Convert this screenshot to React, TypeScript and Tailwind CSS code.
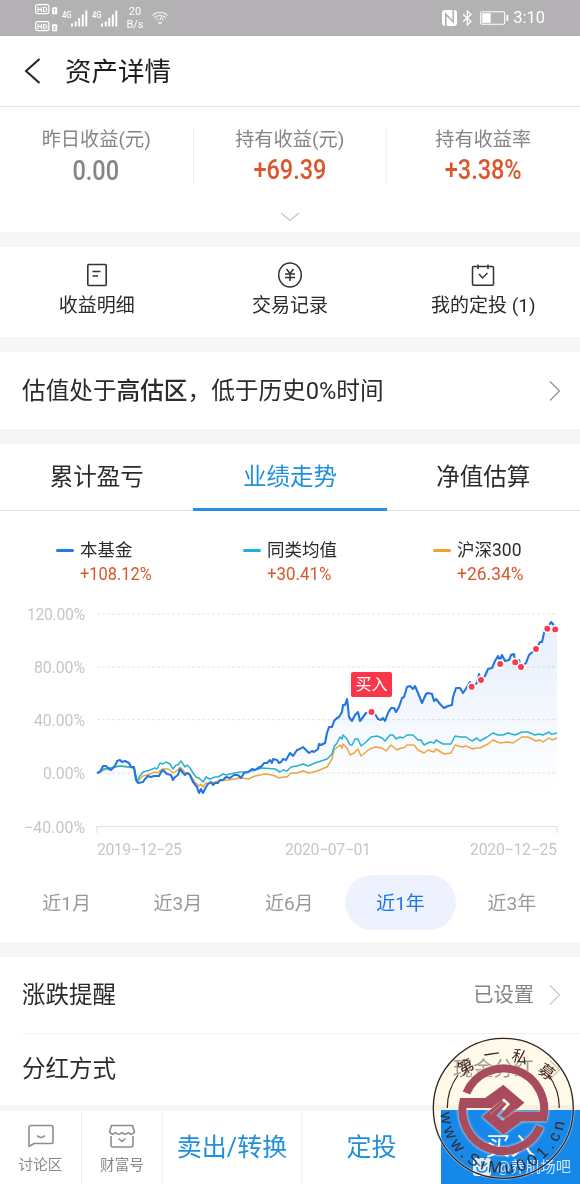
import React from 'react'
import clsx from 'clsx'

const FUND =
  '97,773 100,772 103,766 106,766 109,769 111,770 114,767 116,764 117,761 120,760 122,762 125,761 129,763 131,767 134,767 136,780 138,783 143,782 145,779 148,776 151,777 154,776 157,776 159,776 161,772 163,770 167,774 171,775 173,780 175,777 178,775 180,769 183,773 185,775 187,773 190,775 193,782 197,787 199,793 201,789 203,793 206,787 208,784 211,782 213,785 215,783 218,783 220,780 223,780 226,777 230,778 234,775 238,775 241,778 244,773 248,772 252,769 255,770 258,768 262,766 264,763 267,763 270,760 272,763 273,759 277,760 279,763 281,762 283,759 286,760 290,753 293,756 297,750 300,749 303,747 306,750 309,753 312,751 314,752 318,749 319,744 321,745 325,743 327,733 329,727 332,727 334,721 337,718 339,717 342,712 343,705 345,705 347,699 348,707 349,717 352,721 355,715 358,712 360,721 363,717 366,713 371,712 375,714 378,719 381,720 383,718 385,721 388,713 391,708 394,708 396,712 399,707 402,698 404,697 407,687 410,686 413,689 415,686 418,693 422,703 426,694 428,693 432,694 434,701 436,699 440,704 444,708 448,706 452,705 453,697 456,688 460,688 463,693 467,687 470,682 472,687 477,683 479,674 481,680 485,676 488,669 492,668 495,661 498,656 500,660 502,655 505,661 509,660 511,655 514,654 515,662 519,660 521,667 526,663 529,655 536,649 540,642 542,642 544,633 547,629 551,622 553,624 555,629 557,629'

const PEERS =
  '97,773 104,769 110,768 115,767 120,766 130,767 134,768 137,781 140,776 143,772 147,771 150,770 155,768 157,769 160,763 163,764 166,762 170,764 173,769 176,765 178,765 181,761 185,767 187,765 190,768 193,773 196,777 199,778 203,782 206,777 210,779 215,777 218,777 223,774 226,775 230,774 240,772 248,772 255,770 262,768 275,769 280,772 283,770 287,771 291,767 297,766 303,764 308,766 315,763 327,759 332,754 334,747 337,743 340,737 342,739 343,735 347,739 350,745 352,745 355,739 358,739 361,746 365,743 371,737 377,736 382,738 385,741 390,735 393,735 396,739 400,737 403,738 407,735 413,735 418,740 421,740 424,745 430,742 434,743 436,740 443,744 451,744 455,736 460,737 466,737 472,741 477,738 480,741 487,737 493,733 498,735 503,735 508,733 515,735 522,732 528,732 535,735 539,734 543,735 549,732 551,734 553,734 557,733'

const CSI300 =
  '97,773 104,770 110,768 120,766 134,768 137,782 143,776 150,774 155,772 157,773 162,769 168,769 171,771 173,773 176,771 178,770 180,767 183,770 185,773 189,773 192,778 195,782 199,786 201,784 203,787 206,783 212,783 218,781 228,780 240,778 243,778 248,779 255,776 265,774 272,775 275,776 279,778 283,777 287,777 291,773 297,773 303,771 309,773 317,771 327,767 332,759 334,750 340,745 342,748 343,744 347,748 350,755 354,753 358,749 361,756 367,751 370,749 375,747 382,748 386,751 391,745 397,750 401,748 404,748 407,745 414,745 418,750 424,753 428,750 434,752 436,749 444,754 451,753 455,745 462,747 466,746 473,749 476,748 480,748 488,744 493,740 500,743 508,742 513,743 522,737 528,737 536,741 540,740 543,742 549,738 552,740 557,738'

const BUYS = [
  [371.5, 712], [471.7, 686.7], [481, 680], [500.2, 664], [515.2, 662.3],
  [521, 667], [536, 649], [547.3, 628.8], [555.2, 629.4],
]

const AXIS = [
  { y: 614, label: '120.00%', len: 58 },
  { y: 667, label: '80.00%', len: 51 },
  { y: 719.7, label: '40.00%', len: 51 },
  { y: 773, label: '0.00%', len: 42 },
  { y: 826.5, label: '−40.00%', len: 61 },
]

const STATS = [
  { label: '昨日收益(元)', value: '0.00', tone: 'text-[#858585] top-px' },
  { label: '持有收益(元)', value: '+69.39', tone: 'text-[#d9572a]' },
  { label: '持有收益率', value: '+3.38%', tone: 'text-[#d9572a]' },
]

const LEGEND = [
  { name: '本基金', value: '+108.12%', pad: 'pl-14 w-[243px]', bar: 'bg-[#2477e6]', fit: 'scale-x-[0.91]' },
  { name: '同类均值', value: '+30.41%', pad: 'w-[190px]', bar: 'bg-[#1db1dd]', fit: 'scale-x-[0.94]' },
  { name: '沪深300', value: '+26.34%', pad: '', bar: 'bg-[#f2a32c]', fit: 'scale-x-[0.97]' },
]

const PERIODS = ['近1月', '近3月', '近6月', '近1年', '近3年']

const Gap = () => <div className="h-[15px] shrink-0 bg-[#f6f6f6]" />

const Chevron = ({ className }: { className?: string }) => (
  <svg className={className} width="12" height="22" viewBox="0 0 12 22" fill="none" stroke="currentColor" strokeWidth="1.4">
    <path d="M1 1.5 10.5 11 1 20.5" />
  </svg>
)

const Signal = () => (
  <svg width="17" height="17" viewBox="0 0 17 17" fill="#fff">
    <path d="M0 13.5h2v3H0zM3.7 11.5h2v5h-2zM7.2 8h2v8.5h-2zM10.8 4.5h2v12h-2zM14.3 0.5h2v16h-2z" />
  </svg>
)

const HdBadge = ({ n }: { n: string }) => (
  <svg width="23" height="11" viewBox="0 0 23 11" fontFamily="Roboto, sans-serif" fontWeight="700" textAnchor="middle">
    <rect x="0.6" y="0.6" width="13.3" height="9" rx="2" fill="none" stroke="#fff" strokeWidth="1.2" />
    <text x="7.3" y="7.9" fontSize="7.8" fill="#fff">HD</text>
    <rect x="17" y="3.2" width="5.2" height="7" rx="1" fill="#fff" />
    <text x="19.6" y="9" fontSize="6" fill="#b3b1b4">{n}</text>
  </svg>
)

const StatusBar = () => (
  <div className="flex h-9 shrink-0 items-center justify-between bg-[#b3b1b4] pr-[35px] pl-[35px] font-[Roboto] text-white">
    <div className="flex items-center">
      <div className="flex flex-col gap-[6px]">
        <HdBadge n="1" />
        <HdBadge n="2" />
      </div>
      <div className="ml-[4px] flex h-[17px]">
        <span className="w-[9px] origin-left scale-x-[0.8] text-[9.5px] leading-[9px] font-medium">4G<small className="block text-[6px] leading-[8px] opacity-40">↑↓</small></span>
        <Signal />
      </div>
      <div className="ml-[4px] flex h-[17px]">
        <span className="w-[9px] origin-left scale-x-[0.8] text-[9.5px] leading-[9px] font-medium">4G</span>
        <Signal />
      </div>
      <div className="ml-[8px] w-[18px] text-center text-[11px] leading-[13px]">
        20
        <br />
        B/s
      </div>
      <svg className="ml-[8px] opacity-90" width="16" height="14" viewBox="0 0 16 14" fill="none" stroke="#fff" strokeWidth="1.1">
        <path d="M0.5 4.5C4.5 0.2 11.5 0.2 15.5 4.5M2.5 6.7C3.4 5.7 4.3 5.2 5.3 4.8M10.7 4.8C11.8 5.2 12.7 5.8 13.5 6.7M4.5 9C5 8.4 5.4 8.1 6 7.9M10 7.9C10.7 8.1 11 8.4 11.5 9" />
        <path d="M6.3 5.6C6.3 3.5 9.7 3.5 9.7 5.6C9.7 7 8 7 8 9M6.3 11 8 12.8 9.7 11" />
      </svg>
    </div>
    <div className="flex items-center">
      <svg width="15" height="16" viewBox="0 0 15 16">
        <rect width="15" height="16" rx="3" fill="#fff" />
        <path d="M3.8 16V4.2L10.6 11.3M11.2 0V11.8L4.4 4.7" fill="none" stroke="#b3b1b4" strokeWidth="1.6" />
      </svg>
      <svg className="ml-[5px]" width="11" height="16" viewBox="0 0 11 16" fill="none" stroke="#fff" strokeWidth="1.3">
        <path d="M1 4.2 9 11.5 5.3 15V1L9 4.5 1 11.8" />
      </svg>
      <svg className="ml-[7px]" width="29" height="14" viewBox="0 0 29 14">
        <rect x="0.7" y="0.7" width="24" height="12.6" rx="1.5" fill="none" stroke="#fff" strokeWidth="1.1" />
        <rect x="2.2" y="2.2" width="8.5" height="9.6" fill="#fff" />
        <rect x="26.5" y="4" width="1.7" height="6" fill="#fff" />
      </svg>
      <span className="ml-[4px] pt-px text-[16.5px] leading-none">3:10</span>
    </div>
  </div>
)

const Chart = () => (
  <svg className="block" width="580" height="270" viewBox="0 600 580 270" fontFamily="Roboto, 'Noto Sans CJK SC', sans-serif">
    <defs>
      <linearGradient id="area" x1="0" y1="620" x2="0" y2="795" gradientUnits="userSpaceOnUse">
        <stop offset="0" stopColor="#2f7be8" stopOpacity="0.12" />
        <stop offset="1" stopColor="#2f7be8" stopOpacity="0" />
      </linearGradient>
    </defs>
    {AXIS.map(({ y, label, len }, i) => (
      <g key={label}>
        {i < 4 && <path d={`M97 ${y}H557`} stroke="#e4e4e4" strokeDasharray="3 2" />}
        <text x="85" y={y + 6.2} fontSize="15.8" fill="#c6c6c6" textAnchor="end" textLength={len}>
          {label}
        </text>
      </g>
    ))}
    <path d="M97 833V826.5H557V833" fill="none" stroke="#e2e2e2" strokeWidth="1.2" />
    <polygon points={`97,800 ${FUND} 557,800`} fill="url(#area)" />
    <g fill="none" strokeLinejoin="round">
      <polyline points={CSI300} stroke="#eda63c" strokeWidth="1.5" />
      <polyline points={PEERS} stroke="#25b2cf" strokeWidth="1.5" />
      <polyline points={FUND} stroke="#2375e0" strokeWidth="2.1" />
    </g>
    {BUYS.map(([x, y]) => (
      <circle key={x} cx={x} cy={y} r="3.7" fill="#fa3b4c" stroke="#fff" strokeWidth="1.5" />
    ))}
    <rect x="351" y="672" width="41" height="25" rx="2" fill="#fa374a" />
    <text x="371.5" y="690.3" fontSize="16" fill="#fff" textAnchor="middle">买入</text>
    <g fontSize="15.8" fill="#c6c6c6">
      <text x="97" y="855" textLength="85">2019−12−25</text>
      <text x="285" y="855" textLength="86">2020−07−01</text>
      <text x="470" y="855" textLength="87">2020−12−25</text>
    </g>
  </svg>
)

// Half of the emblem; the other half is the same shape turned by 180 degrees
const SealHalf = () => (
  <>
    <path d="M41.4 63A40.5 40.5 0 0 1 117.6 90" fill="none" stroke="#a94c5f" strokeWidth="8.2" />
    <path d="M34.8 68H60L78.3 54.7 99.5 72.7 80 89.5 75 85.3 85 73.9 79 68.6 66.7 78H35Z" fill="#a94c5f" />
  </>
)

const Seal = () => (
  <svg className="absolute right-0 bottom-0 mix-blend-normal" width="155" height="154" viewBox="0 0 155 154">
    <defs>
      <path id="seal-arc" d="M16 76A62.5 62.5 0 1 0 140.600 76" />
      <filter id="glow" x="-20%" y="-20%" width="140%" height="140%">
        <feDropShadow dx="0" dy="0" stdDeviation="1.5" floodColor="#fff4dc" floodOpacity="0.9" />
      </filter>
    </defs>
    <circle cx="78.3" cy="78.3" r="70" fill="none" stroke="#fff8e8" strokeWidth="2.8" strokeOpacity="0.5" />
    <circle cx="78.3" cy="78.3" r="70" fill="none" stroke="#35211f" strokeWidth="1.3" />
    <path d="M22.3 78A56 56 0 0 1 33 45M123.600 45A56 56 0 0 1 134.3 78" fill="none" stroke="#35211f" strokeWidth="1.2" />
    <g filter="url(#glow)">
      <SealHalf />
      <g transform="rotate(180 78.3 79.7)">
        <SealHalf />
      </g>
    </g>
    <path d="M65 84.500 79 72 M78 89.500 91 78.500" stroke="#f2e3dc" strokeWidth="0.8" strokeOpacity="0.5" />
    <g fill="#4a2723" fontFamily="'Noto Sans CJK SC', sans-serif" fontSize="16" textAnchor="middle">
      <text transform="translate(40.7 36.7) rotate(-30)" y="5.8">第</text>
      <text transform="translate(66.7 24.3) rotate(-8)" y="5.8">一</text>
      <text transform="translate(95 26.5) rotate(14)" y="5.8">私</text>
      <text transform="translate(121.7 41.7) rotate(36)" y="5.8">募</text>
    </g>
    <text fill="#35282b" fontFamily="'Liberation Sans', sans-serif" fontSize="16.5" letterSpacing="4.3">
      <textPath href="#seal-arc" startOffset="7">www.SiMu001.cn</textPath>
    </text>
  </svg>
)

export default function App() {
  return (
    <div className="relative flex h-[1184px] w-[580px] flex-col overflow-hidden bg-white font-[Roboto,'Noto_Sans_CJK_SC',sans-serif] text-[#2b2b2b]">
      <StatusBar />

      {/* Header */}
      <header className="flex h-[71px] shrink-0 items-center border-b border-[#e4e4e4] pl-[24px]">
        <svg width="17" height="26" viewBox="0 0 17 26" fill="none" stroke="#222" strokeWidth="2">
          <path d="M15.5 1 2 13 15.5 25" />
        </svg>
        <h1 className="ml-[24px] pt-[2px] text-[26.5px] leading-none text-[#1c1c1c]">资产详情</h1>
      </header>

      {/* Stats */}
      <section className="flex h-[125px] shrink-0 flex-col items-center">
        <div className="mt-[21px] flex h-[56px] w-full">
          {STATS.map(({ label, value, tone }) => (
            <div key={label} className="flex w-[193.5px] shrink-0 flex-col items-center border-r border-[#f0f0f0] pt-px">
              <div className="text-[19.2px] leading-[21px] text-[#858585]">{label}</div>
              <div className={clsx('relative mt-[7px] scale-x-[0.87] text-[27px] leading-[27px] font-medium', tone)}>{value}</div>
            </div>
          ))}
        </div>
        <svg className="mt-[28px]" width="20" height="10" viewBox="0 0 20 10" fill="none" stroke="#c5c5c5" strokeWidth="1.3">
          <path d="M1 1 10 8.5 19 1" />
        </svg>
      </section>
      <Gap />

      {/* Shortcuts */}
      <section className="grid h-[90px] shrink-0 grid-cols-3 pt-[14px] text-[19px] leading-[28px]">
        <div className="flex flex-col items-center gap-[3px]">
          <svg width="28" height="28" viewBox="0 0 28 28" fill="none" stroke="#333" strokeWidth="1.6">
            <rect x="4.8" y="3.5" width="18.4" height="21" rx="1" />
            <path d="M9.5 10.5H17.5M9.5 15H15" />
          </svg>
          收益明细
        </div>
        <div className="flex flex-col items-center gap-[3px]">
          <svg width="28" height="28" viewBox="0 0 28 28" fill="none" stroke="#333" strokeWidth="1.5">
            <ellipse cx="14" cy="14" rx="11.3" ry="12" />
            <path d="M10.5 8 14 12.5 17.5 8M14 12.5V20M9 13H19M9 16.5H19" />
          </svg>
          交易记录
        </div>
        <div className="flex flex-col items-center gap-[3px]">
          <svg width="28" height="28" viewBox="0 0 28 28" fill="none" stroke="#333" strokeWidth="1.5">
            <rect x="3.5" y="5.5" width="21" height="18.8" rx="1" />
            <path d="M9 3.5V8M19 3.5V8M10 13 13.5 17 18.5 12" />
          </svg>
          我的定投 (1)
        </div>
      </section>
      <Gap />

      {/* Valuation */}
      <section className="flex h-[77px] shrink-0 items-center justify-between pr-[19px] pl-[22px] text-[23.65px]">
        <p className="pt-[2px]">
          估值处于<b className="font-medium">高估区</b>，低于历史0%时间
        </p>
        <Chevron className="text-[#999]" />
      </section>
      <Gap />

      {/* Trend */}
      <section className="flex h-[498px] shrink-0 flex-col">
        <nav className="-mt-px grid h-[68px] w-[580px] shrink-0 grid-cols-3 border-b border-[#e4e4e4] text-[23.5px]">
          <div className="flex items-center justify-center pt-[2px]">累计盈亏</div>
          <div className="-mb-px flex items-center justify-center border-b-[3px] border-[#2a8fd8] pt-[4px] text-[#2090dc]">业绩走势</div>
          <div className="flex items-center justify-center pt-[2px]">净值估算</div>
        </nav>
        <div className="flex h-[89px] shrink-0 pt-[27px]">
          {LEGEND.map(({ name, value, pad, bar, fit }) => (
            <div key={name} className={pad}>
              <div className="flex items-center text-[17.5px] leading-[24px]">
                <i className={clsx('mr-[6px] h-[3px] w-[18px] rounded-full', bar)} />
                {name}
              </div>
              <div className={clsx('ml-[24px] origin-left text-[18px] leading-[24px] text-[#d9572a]', fit)}>{value}</div>
            </div>
          ))}
        </div>
        <Chart />
        <div className="mt-[5px] flex pl-[11px]">
          {PERIODS.map((p) => (
            <span
              key={p}
              className={clsx(
                'flex h-[55px] w-[111.3px] items-center justify-center rounded-full pt-[3px] text-[19px]',
                p === '近1年' ? 'bg-[#edf2fe] text-[#1c74e4]' : 'text-[#999]',
              )}
            >
              {p}
            </span>
          ))}
        </div>
      </section>
      <Gap />

      {/* Settings */}
      <section className="flex h-[148px] shrink-0 flex-col pl-[22px] text-[23.5px]">
        <div className="flex h-[77px] items-center border-b border-[#f1f1f1] pr-[19px]">
          <span className="flex-1 pt-[2px]">涨跌提醒</span>
          <span className="mr-[15px] text-[20.3px] text-[#858585]">已设置</span>
          <Chevron className="text-[#ccc]" />
        </div>
        <div className="flex h-[71px] items-center pr-[19px]">
          <span className="flex-1">分红方式</span>
          <span className="mr-[15px] text-[20.3px] text-[#9c9c9c]">现金分红</span>
          <Chevron className="text-[#ccc]" />
        </div>
      </section>

      {/* Bottom bar */}
      <footer className="flex h-[79px] shrink-0 border-t-[6px] border-[#f5f5f5] text-[25px] text-[#2090dc]">
        <div className="flex w-[82px] flex-col items-center border-r border-[#f0f0f0] pt-[12px] text-[14.6px] leading-[20px] text-[#888]">
          <svg className="mb-[6px]" width="28" height="26" viewBox="0 0 28 26" fill="none" stroke="#8d8d8d" strokeWidth="1.6" strokeLinejoin="round">
            <path d="M4 2.5H24Q26 2.5 26 4.5V18.5Q26 20.5 24 20.5H7L2 23.5V4.5Q2 2.5 4 2.5Z" />
            <path d="M10 12.5Q14 16.5 18 12.5" />
          </svg>
          讨论区
        </div>
        <div className="flex w-[81px] flex-col items-center border-r border-[#f0f0f0] pt-[12px] text-[14.6px] leading-[20px] text-[#888]">
          <svg className="mb-[6px]" width="28" height="26" viewBox="0 0 28 26" fill="none" stroke="#8d8d8d" strokeWidth="1.6" strokeLinejoin="round">
            <path d="M3.5 2.5H24.5L26.5 9Q23.5 13 20.5 9.5Q17.2 13 14 9.5Q10.8 13 7.5 9.5Q4.5 13 1.5 9Z" />
            <path d="M3 13V22Q3 24 5 24H23Q25 24 25 22V13M10.5 15.5 14 18.5 17.5 15.5" />
          </svg>
          财富号
        </div>
        <div className="flex w-[139px] items-center justify-center border-r border-[#f0f0f0]">卖出/转换</div>
        <div className="flex w-[139px] items-center justify-center">定投</div>
        <div className="relative -mt-px flex flex-1 items-center justify-center bg-[#1688ea] text-white">
          买入
          <div className="absolute right-[9px] bottom-[5px] flex items-center gap-[6px] text-[15.2px] leading-[24px] text-white/80">
            <svg width="18" height="18" viewBox="0 0 18 18">
              <rect width="18" height="18" rx="3" fill="#fff" fillOpacity="0.85" />
              <path d="M4 5 7 8M14 5 11 8M4 9Q4 14 9 14T14 9M9 3V9" fill="none" stroke="#1688ea" strokeWidth="1.5" />
            </svg>
            @养肌场吧
          </div>
        </div>
      </footer>

      {/* Cream tint of the seal, only over the white rows */}
      <div className="absolute right-[6px] bottom-[74px] h-[72px] w-[142px] rounded-t-full bg-[#fffaea] mix-blend-multiply" />
      <Seal />
    </div>
  )
}
